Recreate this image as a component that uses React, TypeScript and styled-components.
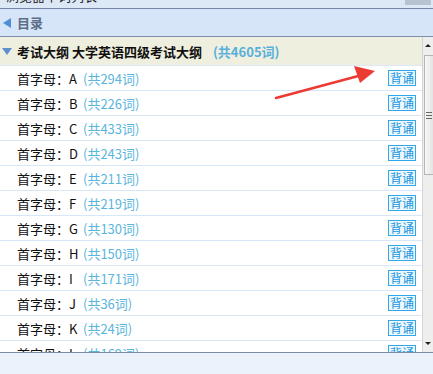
import * as React from "react";
import styled, { createGlobalStyle } from "styled-components";

const letters = [
  { letter: "A", count: 294 },
  { letter: "B", count: 226 },
  { letter: "C", count: 433 },
  { letter: "D", count: 243 },
  { letter: "E", count: 211 },
  { letter: "F", count: 219 },
  { letter: "G", count: 130 },
  { letter: "H", count: 150 },
  { letter: "I", count: 171 },
  { letter: "J", count: 36 },
  { letter: "K", count: 24 },
  { letter: "L", count: 169 },
];

const GlobalStyle = createGlobalStyle`
  html, body {
    margin: 0;
    padding: 0;
    background: #ebf2fb;
  }
  body {
    font-family: "Liberation Sans", "Noto Sans CJK SC", sans-serif;
    font-size: 13px;
  }
`;

export default function App() {
  return (
    <Window>
      <GlobalStyle />
      <TopStrip>
        <TopTitle>浏览器单词列表</TopTitle>
        <TopButton />
      </TopStrip>
      <NavBar>
        <LeftTriangle />
        <NavTitle>目录</NavTitle>
      </NavBar>
      <Main>
        <List>
          <SectionHeader>
            <DownTriangle />
            <SectionTitle>考试大纲 大学英语四级考试大纲</SectionTitle>
            <SectionCount>(共4605词)</SectionCount>
          </SectionHeader>
          {letters.map((item) => (
            <Row key={item.letter}>
              <Label>首字母：{item.letter}</Label>
              <Count>(共{item.count}词)</Count>
              <ReciteButton>背诵</ReciteButton>
            </Row>
          ))}
          <Arrow width="110" height="40" viewBox="0 0 110 40">
            <line x1="2" y1="36" x2="88" y2="13" stroke="#ec3b33" strokeWidth="2.6" strokeLinecap="round" />
            <polygon points="101,9 80,4 86,21" fill="#ec3b33" />
          </Arrow>
        </List>
        <Scrollbar>
          <ArrowUp />
          <Thumb>
            <Grip />
            <Grip />
            <Grip />
          </Thumb>
          <Track />
          <ArrowDown />
        </Scrollbar>
      </Main>
      <Footer />
    </Window>
  );
}

const Window = styled.div`
  width: 433px;
  height: 374px;
  display: flex;
  flex-direction: column;
  overflow: hidden;
`;

const TopStrip = styled.div`
  height: 8px;
  background: #dce8f6;
  border-bottom: 1px solid #7487a8;
  display: flex;
  align-items: flex-start;
  overflow: hidden;
  padding-left: 6px;
`;

const TopTitle = styled.span`
  font-family: "Noto Sans CJK SC", sans-serif;
  font-size: 13px;
  line-height: 16px;
  height: 16px;
  margin-top: -12px;
  color: #222;
  flex: 1;
`;

const TopButton = styled.span`
  width: 26px;
  height: 5px;
  background: #b9c2cf;
  margin-right: 2px;
`;

const NavBar = styled.div`
  height: 27px;
  background: #d6e6f8;
  border-bottom: 1px solid #7f8fb0;
  display: flex;
  align-items: center;
  padding-left: 3px;
  gap: 6px;
`;

const LeftTriangle = styled.span`
  width: 0;
  height: 0;
  border-top: 5px solid transparent;
  border-bottom: 5px solid transparent;
  border-right: 8px solid #4f8fd6;
`;

const NavTitle = styled.span`
  font-family: "Noto Sans CJK SC", sans-serif;
  font-weight: bold;
  font-size: 13px;
  color: #5d6c88;
`;

const Main = styled.div`
  height: 315px;
  display: flex;
  border-bottom: 1px solid #7d8aa6;
`;

const List = styled.div`
  flex: 1;
  overflow: hidden;
  position: relative;
  background: #fff;
`;

const SectionHeader = styled.div`
  height: 28px;
  background: #efefdf;
  border-bottom: 1px solid #dbe9f6;
  display: flex;
  align-items: center;
  padding-left: 2px;
`;

const DownTriangle = styled.span`
  width: 0;
  height: 0;
  border-left: 5px solid transparent;
  border-right: 5px solid transparent;
  border-top: 7px solid #5d8fce;
  margin-right: 5px;
`;

const SectionTitle = styled.span`
  font-family: "Noto Sans CJK SC", sans-serif;
  font-weight: bold;
  font-size: 13px;
  color: #111;
`;

const SectionCount = styled.span`
  font-family: "Noto Sans CJK SC", sans-serif;
  font-weight: bold;
  font-size: 13px;
  color: #58b0dc;
  margin-left: 11px;
`;

const Row = styled.div`
  height: 24px;
  border-bottom: 1px solid #d6e7f8;
  display: flex;
  align-items: center;
  padding-left: 17px;
  padding-right: 6px;
`;

const Label = styled.span`
  font-family: "Noto Sans CJK SC", sans-serif;
  font-size: 13px;
  color: #111;
  width: 66px;
`;

const Count = styled.span`
  font-family: "Noto Sans CJK SC", sans-serif;
  font-size: 13px;
  color: #5ab5dd;
  flex: 1;
`;

const ReciteButton = styled.span`
  width: 26px;
  height: 14px;
  border: 1px solid #32a9e6;
  background: #eef8fe;
  color: #2196dd;
  font-family: "Noto Sans CJK SC", sans-serif;
  font-size: 12px;
  line-height: 14px;
  text-align: center;
  white-space: nowrap;
`;

const Arrow = styled.svg`
  position: absolute;
  left: 274px;
  top: 25px;
`;

const Scrollbar = styled.div`
  width: 10px;
  background: #eeeeee;
  border-left: 1px solid #d4d4d4;
  display: flex;
  flex-direction: column;
  align-items: center;
`;

const ArrowUp = styled.span`
  margin-top: 7px;
  width: 0;
  height: 0;
  border-left: 3px solid transparent;
  border-right: 3px solid transparent;
  border-bottom: 3px solid #222;
`;

const Thumb = styled.div`
  margin-top: 8px;
  width: 9px;
  height: 120px;
  align-self: flex-end;
  box-sizing: border-box;
  border: 1px solid #b5b5b5;
  border-right: none;
  background: linear-gradient(to right, #f8f8f8, #e4e4e4);
  display: flex;
  flex-direction: column;
  justify-content: center;
  align-items: center;
  gap: 2px;
`;

const Grip = styled.span`
  width: 6px;
  height: 1px;
  background: #666;
`;

const Track = styled.div`
  flex: 1;
`;

const ArrowDown = styled.span`
  margin-bottom: 7px;
  width: 0;
  height: 0;
  border-left: 3px solid transparent;
  border-right: 3px solid transparent;
  border-top: 3px solid #222;
`;

const Footer = styled.div`
  flex: 1;
  background: #ebf2fb;
`;
